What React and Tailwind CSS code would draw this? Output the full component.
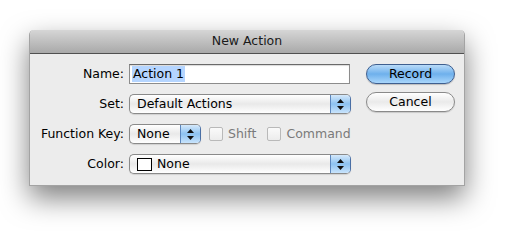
import React from "react";

function Arrows() {
  return (
    <div className="flex flex-col items-center gap-[3px]">
      <svg width="7" height="4" viewBox="0 0 7 4"><path d="M3.5 0 L7 4 L0 4 Z" fill="#111" /></svg>
      <svg width="7" height="4" viewBox="0 0 7 4"><path d="M0 0 L7 0 L3.5 4 Z" fill="#111" /></svg>
    </div>
  );
}

function Popup({ className, children }) {
  return (
    <div className={`flex h-[20px] items-stretch overflow-hidden rounded-[5px] border border-[#8a8a8a] border-r-[#4a6fa5] bg-gradient-to-b from-white via-[#e9e9e9] to-white shadow-[0_1px_1px_rgba(0,0,0,0.12)] ${className}`}>
      <div className="flex flex-1 items-center pl-[7px]">{children}</div>
      <div className="flex w-[20px] items-center justify-center border-l border-[#5d87bd] bg-gradient-to-b from-[#d5e9fb] via-[#8cc2f1] to-[#c9e4fc]">
        <Arrows />
      </div>
    </div>
  );
}

function Checkbox({ label }) {
  return (
    <div className="flex items-center gap-[5px] text-[#7a7a7a]">
      <div className="h-[14px] w-[14px] rounded-[2px] border border-[#b9b9b9] bg-gradient-to-b from-[#fafafa] to-[#ececec]" />
      <span>{label}</span>
    </div>
  );
}

export default function App() {
  return (
    <div
      className="h-[242px] w-[507px] overflow-hidden bg-white pl-[29px] pt-[30px] text-[12.5px] text-black"
      style={{ fontFamily: '"DejaVu Sans", "Lucida Grande", sans-serif' }}
    >
      <div className="flex h-[156px] w-[436px] flex-col overflow-hidden rounded-t-[5px] border-x border-b border-[#a3a3a3] bg-[#ececec] shadow-[0_12px_28px_rgba(0,0,0,0.5)]">
        <div className="flex h-[24px] shrink-0 items-center justify-center border-b border-[#505050] bg-gradient-to-b from-[#d6d6d6] to-[#a9a9a9] text-[12.5px] text-[#1a1a1a]">
          New Action
        </div>
        <div className="flex pt-[10px]">
          <div className="grid grid-cols-[94px_222px] gap-x-[5px] gap-y-[10px]">
            <div className="flex h-[20px] items-center justify-end">Name:</div>
            <div className="flex h-[20px] w-[221px] items-center border border-[#8c8c8c] border-t-[#6a6a6a] bg-white pl-[2px] shadow-[inset_0_1px_1px_rgba(0,0,0,0.15)]">
              <span className="bg-[#b5d5ff] px-[1px] leading-[16px]">Action 1</span>
            </div>

            <div className="flex h-[20px] items-center justify-end">Set:</div>
            <Popup className="w-[222px]">Default Actions</Popup>

            <div className="flex h-[20px] items-center justify-end">Function Key:</div>
            <div className="flex h-[20px] items-center">
              <Popup className="w-[72px]">None</Popup>
              <div className="ml-[8px]"><Checkbox label="Shift" /></div>
              <div className="ml-[11px]"><Checkbox label="Command" /></div>
            </div>

            <div className="flex h-[20px] items-center justify-end">Color:</div>
            <Popup className="w-[222px]">
              <div className="mr-[5px] h-[13px] w-[15px] border border-black bg-white" />
              <span>None</span>
            </Popup>
          </div>
          <div className="ml-[15px] flex flex-col gap-[8px]">
            <div className="flex h-[20px] w-[89px] items-center justify-center rounded-full border border-[#3f5f8f] bg-gradient-to-b from-[#b9dbf8] via-[#6eb0ec] to-[#a9d6fb] shadow-[0_1px_1px_rgba(0,0,0,0.2)]">
              Record
            </div>
            <div className="flex h-[20px] w-[89px] items-center justify-center rounded-full border border-[#8a8a8a] bg-gradient-to-b from-white via-[#eaeaea] to-white shadow-[0_1px_1px_rgba(0,0,0,0.15)]">
              Cancel
            </div>
          </div>
        </div>
      </div>
    </div>
  );
}
